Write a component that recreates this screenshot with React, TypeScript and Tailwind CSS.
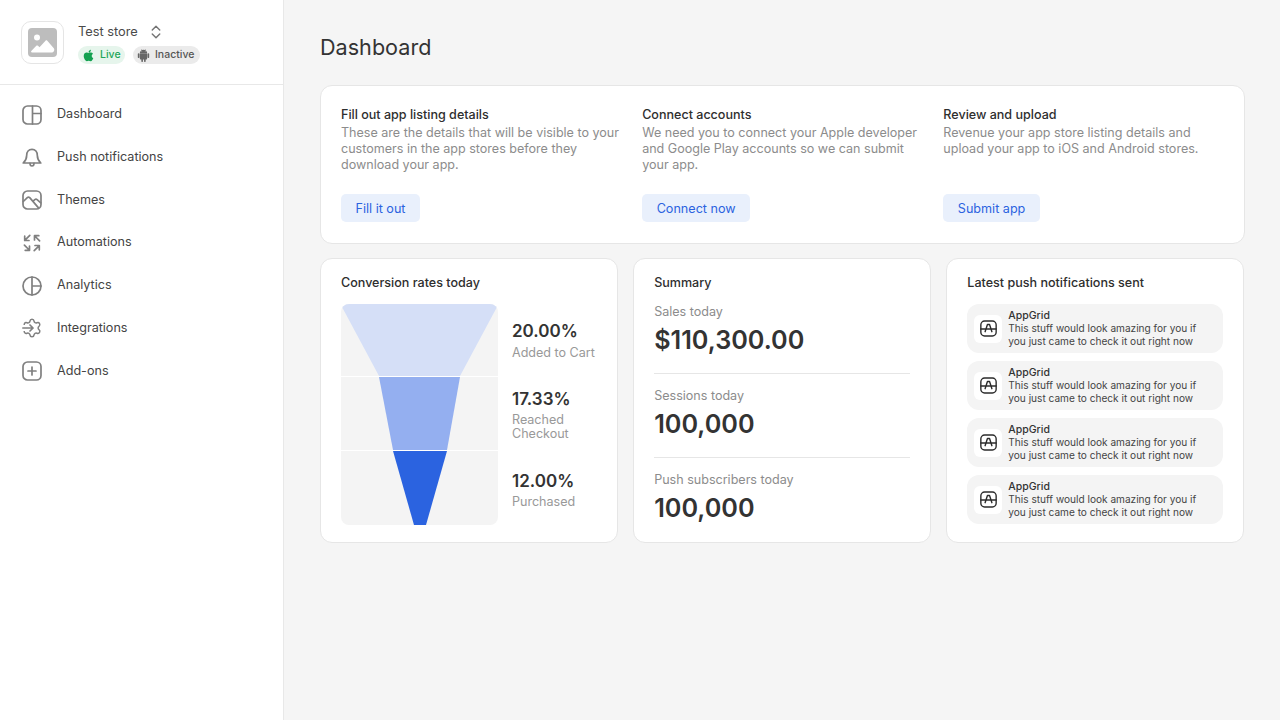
import React from "react";
import { FaApple } from "react-icons/fa";
import { BsAndroid2 } from "react-icons/bs";

const S = ({ children, size = 20 }: { children: React.ReactNode; size?: number }) => (
  <svg width={size} height={size} viewBox="0 0 20 20" fill="none" stroke="#808080" strokeWidth="1.7" strokeLinecap="round" strokeLinejoin="round" className="shrink-0">
    {children}
  </svg>
);

const arrow = "M12.5 7V2.700H16.800M12.800 3 17.600 7.800";

const icons: Record<string, React.ReactNode> = {
  Dashboard: (
    <S>
      <rect x="1" y="1" width="18" height="18" rx="4.500" />
      <path d="M10.500 1V19M10.500 8.500H19" />
    </S>
  ),
  "Push notifications": (
    <S>
      <path d="M10 1.300C6.600 1.300 4.700 4 4.700 7.200c0 3.600-1.200 5.600-3.500 7.800h17.600c-2.300-2.200-3.500-4.200-3.500-7.800C15.300 4 13.400 1.300 10 1.300Z" />
      <path d="M8 15.300c0 1.600.8 2.700 2 2.700s2-1.100 2-2.700" />
    </S>
  ),
  Themes: (
    <S>
      <rect x="1" y="1" width="18" height="18" rx="4.500" />
      <path d="M1.300 11.500 5.300 7.600c.8-.7 1.600-.7 2.400 0l8.800 10.300M10.800 11.300l2-1.700c.8-.6 1.600-.6 2.300 0l3.700 3.200" />
    </S>
  ),
  Automations: (
    <S>
      <path d={arrow} />
      <path d={arrow} transform="rotate(-90 10 10)" />
      <path d={arrow} transform="rotate(180 10 10)" />
      <path d={arrow} transform="rotate(90 10 10)" />
    </S>
  ),
  Analytics: (
    <S>
      <circle cx="10" cy="10" r="9" />
      <path d="M10 1V19M10 10H19" />
    </S>
  ),
  Integrations: (
    <S>
      <g transform="translate(-0.500 -0.500) scale(0.875)">
        <path
          clipPath="url(#gearclip)"
          d="M9.671 4.136a2.34 2.34 0 0 1 4.659 0 2.34 2.34 0 0 0 3.319 1.915 2.34 2.34 0 0 1 2.33 4.033 2.34 2.34 0 0 0 0 3.831 2.34 2.34 0 0 1-2.33 4.033 2.34 2.34 0 0 0-3.319 1.915 2.34 2.34 0 0 1-4.659 0 2.34 2.34 0 0 0-3.32-1.915 2.34 2.34 0 0 1-2.33-4.033 2.34 2.34 0 0 0 0-3.831A2.34 2.34 0 0 1 6.350 6.051a2.34 2.34 0 0 0 3.320-1.915"
        />
      </g>
      <defs>
        <clipPath id="gearclip">
          <path d="M0 0H24V24H0V15.500H9V8.500H0Z" />
        </clipPath>
      </defs>
      <path d="M.800 10H11M8 7l3 3-3 3" />
    </S>
  ),
  "Add-ons": (
    <S>
      <rect x="1" y="1" width="18" height="18" rx="4.500" />
      <path d="M10 6v8M6 10h8" />
    </S>
  ),
};

const nav = ["Dashboard", "Push notifications", "Themes", "Automations", "Analytics", "Integrations", "Add-ons"];

const steps = [
  { t: "Fill out app listing details", d: "These are the details that will be visible to your customers in the app stores before they download your app.", b: "Fill it out" },
  { t: "Connect accounts", d: "We need you to connect your Apple developer and Google Play accounts so we can submit your app.", b: "Connect now" },
  { t: "Review and upload", d: "Revenue your app store listing details and upload your app to iOS and Android stores.", b: "Submit app" },
];

const Funnel = () => (
  <svg width="157" height="221" viewBox="0 0 157 221" className="shrink-0">
    <path d="M1 5Q1 0 5 0H152Q157 0 156 3L119 72H38L1 3Z" fill="#d5dff7" />
    <path d="M38 73H119L106 146H52Z" fill="#94aff0" />
    <path d="M52 147H106L85 221H73Z" fill="#2b63e0" />
  </svg>
);

const Stat = ({ v, l, w }: { v: string; l: string; w?: boolean }) => (
  <div className={w ? "w-[84px]" : ""}>
    <div className="text-[17px] leading-[20px] font-semibold text-[#333333]">{v}</div>
    <div className="mt-[4.500px] text-[12.550px] leading-[14px] text-[#999999]">{l}</div>
  </div>
);

const AppGridIcon = () => (
  <svg width="17" height="17" viewBox="0 0 16 16" fill="none" stroke="#2b2b2b" strokeWidth="1.300" strokeLinecap="round" strokeLinejoin="round">
    <rect x="0.800" y="1" width="14.400" height="14" rx="3.500" />
    <path d="M0.800 8.500h14.400M4.800 11 7 4.200h2L11.200 11" />
  </svg>
);

const Metric = ({ l, v }: { l: string; v: string }) => (
  <div>
    <div className="text-[12.550px] leading-[16px] text-[#8c8c8c]">{l}</div>
    <div className="mt-[5px] text-[25.200px] leading-[30px] font-semibold text-[#333333]">{v}</div>
  </div>
);

export default function App() {
  return (
    <div className="flex min-h-[720px] bg-[#f5f5f5] text-[#333333] font-['Inter',sans-serif]">
      <aside className="w-[284px] shrink-0 bg-white border-r border-[#e8e8e8]">
        <div className="h-[85px] border-b border-[#e8e8e8] pl-[21px] pt-[21px] flex gap-[14px]">
          <div className="w-[43px] h-[43px] rounded-[10px] border border-[#e5e5e5] flex items-center justify-center">
            <svg width="29" height="29" viewBox="0 0 29 29">
              <rect width="29" height="29" rx="4" fill="#bdbdbd" />
              <circle cx="9" cy="9.500" r="3" fill="#fff" />
              <path d="M4 24.500c-.8 0-1.200-.8-.7-1.400l5-5.300c.5-.5 1.200-.5 1.700 0l1.500 1.400 6-6.500c.5-.5 1.300-.5 1.800 0l6.500 7.500c1 1.200.5 3.300-1.500 4.300Z" fill="#fff" />
            </svg>
          </div>
          <div>
            <div className="flex items-center h-[21px] gap-[13px]">
              <span className="text-[12.800px] text-[#4a4a4a] relative top-[0.500px]">Test store</span>
              <svg width="10" height="16" viewBox="0 0 12 16" fill="none" stroke="#757575" strokeWidth="1.700" strokeLinecap="round" strokeLinejoin="round" className="mt-[1px]">
                <path d="M1.500 5.500 6 1l4.500 4.500M1.500 10.500 6 15l4.500-4.500" />
              </svg>
            </div>
            <div className="flex gap-[8px] mt-[4px]">
              <span className="w-[47px] h-[18px] rounded-full bg-[#e6f5ec] pl-[4px] flex items-center gap-[5px] text-[10.500px] font-medium text-[#22a559]">
                <FaApple size={13} color="#13a150" />Live
              </span>
              <span className="w-[67px] h-[18px] rounded-full bg-[#ebebeb] pl-[4px] flex items-center gap-[5px] text-[10.500px] font-medium text-[#555555]">
                <BsAndroid2 size={13} color="#666666" />Inactive
              </span>
            </div>
          </div>
        </div>
        <nav className="pl-[22px] pt-[8.500px] flex flex-col">
          {nav.map((n) => (
            <div key={n} className="h-[42.700px] flex items-center gap-[15px] text-[12.600px] font-normal text-[#444444]">
              {icons[n]}
              <span>{n}</span>
            </div>
          ))}
        </nav>
      </aside>
      <main className="flex-1 pl-[36px] pr-[35.500px] pt-[33px]">
        <h1 className="text-[21.600px] leading-[28px] font-normal text-[#333333]">Dashboard</h1>
        <section className="mt-[24px] h-[159px] rounded-[12px] border border-[#e6e6e6] bg-white px-[20px] pt-[21px] grid grid-cols-3 gap-[21px]">
          {steps.map((s) => (
            <div key={s.t}>
              <div className="text-[12.550px] leading-[16px] font-medium text-[#2e2e2e]">{s.t}</div>
              <p className="mt-[2px] h-[48px] text-[12.550px] leading-[16px] text-[#8c8c8c]">{s.d}</p>
              <button className="mt-[21px] h-[28px] px-[14.500px] rounded-[5px] bg-[#e9f0fc] text-[12.600px] font-normal text-[#2b63e0] pt-[2px]">{s.b}</button>
            </div>
          ))}
        </section>
        <section className="mt-[14px] grid grid-cols-3 gap-[15px]">
          <div className="h-[285px] rounded-[12px] border border-[#e6e6e6] bg-white pl-[20px] pt-[16px]">
            <div className="text-[12.550px] leading-[16px] font-medium text-[#2e2e2e]">Conversion rates today</div>
            <div className="mt-[13px] flex gap-[14px]">
              <div className="w-[157px] h-[221px] rounded-[8px] bg-[#f4f4f4] relative overflow-hidden">
                <Funnel />
                <div className="absolute left-0 right-0 top-[72px] h-px bg-white" />
                <div className="absolute left-0 right-0 top-[146px] h-px bg-white" />
              </div>
              <div className="flex flex-col pt-[17px]">
                <Stat v="20.00%" l="Added to Cart" />
                <div className="mt-[29px]"><Stat v="17.33%" l="Reached Checkout" w /></div>
                <div className="mt-[29.500px]"><Stat v="12.00%" l="Purchased" /></div>
              </div>
            </div>
          </div>
          <div className="h-[285px] rounded-[12px] border border-[#e6e6e6] bg-white px-[20px] pt-[16px]">
            <div className="text-[12.550px] leading-[16px] font-medium text-[#2e2e2e]">Summary</div>
            <div className="mt-[13px]"><Metric l="Sales today" v="$110,300.00" /></div>
            <div className="mt-[18px] h-px bg-[#e6e6e6]" />
            <div className="mt-[14px]"><Metric l="Sessions today" v="100,000" /></div>
            <div className="mt-[18px] h-px bg-[#e6e6e6]" />
            <div className="mt-[14px]"><Metric l="Push subscribers today" v="100,000" /></div>
          </div>
          <div className="h-[285px] rounded-[12px] border border-[#e6e6e6] bg-white px-[20px] pt-[16px]">
            <div className="text-[12.550px] leading-[16px] font-medium text-[#2e2e2e]">Latest push notifications sent</div>
            <div className="mt-[13px] flex flex-col gap-[8px]">
              {[0, 1, 2, 3].map((i) => (
                <div key={i} className="h-[49px] rounded-[12px] bg-[#f4f4f4] flex items-center pl-[7px] gap-[6px]">
                  <div className="w-[28px] h-[28px] rounded-[6px] bg-white flex items-center justify-center shrink-0">
                    <AppGridIcon />
                  </div>
                  <div className="text-[10.100px] leading-[13px] text-[#444444]">
                    <div className="text-[10.500px] font-medium text-[#333333]">AppGrid</div>
                    <div className="mt-[0.500px]">This stuff would look amazing for you if<br />you just came to check it out right now</div>
                  </div>
                </div>
              ))}
            </div>
          </div>
        </section>
      </main>
    </div>
  );
}
